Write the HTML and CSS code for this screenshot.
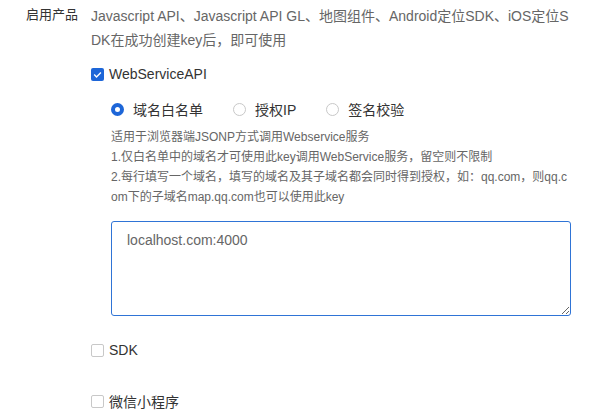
FILE: index.html
```html
<!DOCTYPE html>
<html lang="zh-CN">
<head>
<meta charset="utf-8">
<title>启用产品</title>
<link rel="stylesheet" href="styles.css">
</head>
<body>
<div class="form-row">
  <div class="label">启用产品</div>
  <div class="content">
    <p class="desc">Javascript API、Javascript API GL、地图组件、Android定位SDK、iOS定位SDK在成功创建key后，即可使用</p>

    <div class="check-item check-first">
      <span class="checkbox checked">
        <svg viewBox="0 0 13 13" width="13" height="13"><path d="M3.2 6.6 L5.5 8.9 L9.9 4.4" fill="none" stroke="#fff" stroke-width="1.4"/></svg>
      </span>
      <span class="check-text">WebServiceAPI</span>
    </div>

    <div class="sub">
      <div class="radio-group">
        <label class="radio-item"><span class="radio on"></span><span class="radio-text">域名白名单</span></label>
        <label class="radio-item"><span class="radio"></span><span class="radio-text">授权IP</span></label>
        <label class="radio-item"><span class="radio"></span><span class="radio-text">签名校验</span></label>
      </div>
      <div class="help">
        <p>适用于浏览器端JSONP方式调用Webservice服务</p>
        <p>1.仅白名单中的域名才可使用此key调用WebService服务，留空则不限制</p>
        <p>2.每行填写一个域名，填写的域名及其子域名都会同时得到授权，如：qq.com，则qq.com下的子域名map.qq.com也可以使用此key</p>
      </div>
      <textarea class="area">localhost.com:4000</textarea>
    </div>

    <div class="check-item check-sdk">
      <span class="checkbox"></span>
      <span class="check-text">SDK</span>
    </div>
    <div class="check-item check-wx">
      <span class="checkbox"></span>
      <span class="check-text">微信小程序</span>
    </div>
  </div>
</div>
</body>
</html>
```
FILE: styles.css
```css
html, body {
  margin: 0;
  padding: 0;
  background: #fff;
}
body {
  font-family: "Liberation Sans", Arial, "Noto Sans CJK SC", sans-serif;
  color: #333;
  width: 590px;
  height: 418px;
  overflow: hidden;
}
p { margin: 0; }

.form-row {
  display: flex;
  align-items: flex-start;
}
.label {
  width: 78px;
  padding-right: 13px;
  text-align: right;
  font-size: 13px;
  line-height: 24px;
  padding-top: 3px;
  color: #333;
  flex: none;
}
.content {
  width: 484px;
  flex: none;
}
.desc {
  font-size: 14px;
  line-height: 24px;
  padding-top: 4px;
  color: #666;
  word-break: break-all;
}

.check-item {
  display: flex;
  align-items: center;
  height: 20px;
}
.check-first { margin-top: 12px; }
.check-sdk { margin-top: 24px; }
.check-wx { margin-top: 31px; }

.checkbox {
  width: 11px;
  height: 11px;
  border: 1px solid #c8c8c8;
  border-radius: 2px;
  background: #fff;
  flex: none;
  display: flex;
  align-items: center;
  justify-content: center;
}
.checkbox.checked {
  width: 13px;
  height: 13px;
  border: none;
  background: #1d66d8;
}
.check-text {
  margin-left: 5px;
  font-size: 14px;
  color: #333;
}

.sub {
  margin-left: 20px;
}
.radio-group {
  display: flex;
  align-items: center;
  height: 20px;
  margin-top: 15px;
}
.radio-item {
  display: flex;
  align-items: center;
  margin-right: 30px;
}
.radio {
  box-sizing: border-box;
  width: 13px;
  height: 13px;
  border-radius: 50%;
  border: 1px solid #c8c8c8;
  background: #fff;
  flex: none;
}
.radio.on {
  border: 4px solid #1d66d8;
}
.radio-text {
  margin-left: 9px;
  font-size: 14px;
  color: #333;
}

.help {
  width: 458px;
  margin-top: 8px;
  font-size: 12px;
  line-height: 20px;
  color: #666;
  word-break: break-all;
}

.area {
  display: block;
  box-sizing: border-box;
  margin-top: 14px;
  width: 460px;
  height: 95px;
  border: 1px solid #2f74d6;
  border-radius: 3px;
  padding: 8px 15px;
  font-family: "Liberation Sans", Arial, "Noto Sans CJK SC", sans-serif;
  font-size: 14px;
  line-height: 20px;
  color: #666;
  outline: none;
  resize: vertical;
}
```
